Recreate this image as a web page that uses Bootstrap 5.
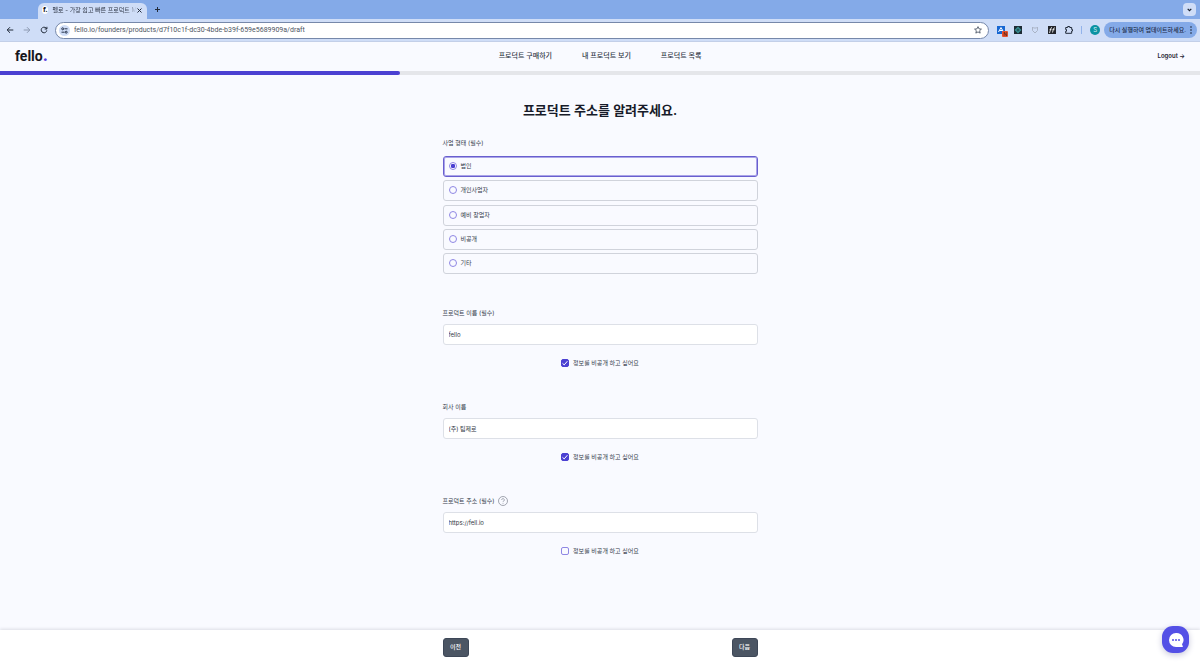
<!DOCTYPE html>
<html lang="ko">
<head>
<meta charset="utf-8">
<meta name="viewport" content="width=device-width, initial-scale=1">
<title>펠로 - 가장 쉽고 빠른 프로덕트</title>
<link href="https://cdn.jsdelivr.net/npm/bootstrap@5.3.0/dist/css/bootstrap.min.css" rel="stylesheet">
<style>
  :root { --brand: #4b40d2; --ink: #343b4a; --line: #d0d3db; }
  body { font-family: Inter, "Noto Sans CJK KR", sans-serif; font-size: 6px; line-height: 12px; color: var(--ink); background: #f9faff; }
  svg { display: block; flex: none; }
  .plain { border: 0; background: none; padding: 0; color: inherit; }
  .plain, .field-box, .step-btn { font-size: inherit; line-height: inherit; }
  .icon-gap { gap: 9px; }

  .tab-strip { height: 19px; background: #84aae8; padding: 3px 4px 0 38px; }
  .browser-tab { width: 109px; height: 16px; background: #cfddf7; border-radius: 6px 6px 0 0; color: #2b3342; padding: 0 5px 2px 4px; }
  .favicon { width: 8px; height: 8px; border-radius: 50%; background: #fff; font: 700 7px/8px "Noto Sans", sans-serif; text-align: center; color: #111; margin-right: 4px; }
  .tab-title { white-space: nowrap; -webkit-mask-image: linear-gradient(90deg, #000 85%, transparent); mask-image: linear-gradient(90deg, #000 85%, transparent); }
  .tab-list { width: 13px; height: 13px; border-radius: 4px; background: #cfddf7; }
  .tool-bar { height: 23px; background: #cfddf7; border-bottom: 1px solid #c3cfe8; padding: 0 3px 0 6px; color: #26303f; }
  .address { height: 17px; border: 1px solid #7688aa; border-radius: 9px; background: #fff; margin-left: 7px; padding: 0 6px 0 3px; }
  .site-info { width: 11px; height: 11px; border-radius: 50%; background: #cfddf7; }
  .address input { font-family: Roboto, sans-serif; font-size: 7px; color: #4d5462; outline: 0; min-width: 0; }
  .ext-count { right: -3px; bottom: -3px; width: 6px; height: 6px; border-radius: 1px; background: #e7502c; font-size: 5px; line-height: 6px; text-align: center; color: #31160f; }
  .avatar { width: 10px; height: 10px; border-radius: 50%; background: #0b93a3; color: #d8f2f4; line-height: 10px; }
  .update-pill { height: 16px; border-radius: 8px; background: #84aae8; padding: 0 5px; color: #1d2c4a; white-space: nowrap; font-weight: 500; }

  .site-head { height: 29px; padding: 0 15px 2px; font-size: 7px; font-weight: 500; }
  .site-head a { color: #303746; text-decoration: none; }
  .site-head nav { gap: 30px; }
  .site-head .logo { font: 700 14px/16px Roboto, sans-serif; color: #15161c; }
  .site-head .logo span { color: #5a3fe0; font-size: 18px; }
  .site-head .logout { font-size: 6px; font-weight: 600; color: #1d2231; }
  .step-track { height: 4px; border-radius: 0; background: #e5e6ea; }
  .step-track .progress-bar { background: var(--brand); border-radius: 0 2px 2px 0; }

  .form-col { width: 100%; max-width: 315px; }
  h1 { font-size: 13px; line-height: 20px; font-weight: 600; color: #171b29; margin: 25px 0 17px; }
  fieldset { margin-bottom: 33px; }
  legend, .field-name { font-size: 6px; line-height: 12px; font-weight: 400; float: none; }
  legend { margin: 0 0 7px; }
  .choices { height: 118px; }
  .choice { height: 21px; border: 1px solid var(--line); border-radius: 3px; padding: 0 5px 1px; gap: 4px; }
  .choice:has(:checked) { border-color: #695fcf; box-shadow: 0 0 0 1px #aaa4e8 inset; }
  .tick { appearance: none; width: 8px; height: 8px; margin: 0; border: 1px solid #8f87e4; background: transparent; flex: none; }
  .tick[type=radio] { border-radius: 50%; }
  .tick[type=radio]:checked { background: radial-gradient(circle, var(--brand) 45%, #fff 60%); }
  .tick[type=checkbox] { border-radius: 2px; }
  .tick[type=checkbox]:checked { border-color: var(--brand); background: var(--brand) url("data:image/svg+xml,%3Csvg xmlns='http://www.w3.org/2000/svg' viewBox='0 0 8 8'%3E%3Cpath fill='none' stroke='white' stroke-width='1' d='M1.5 4.3l1.7 1.6 3.2-3.7'/%3E%3C/svg%3E") center/8px; }
  .field { margin-bottom: 32px; }
  .field-box { height: 21px; border: 1px solid #dde0e7; border-radius: 3px; background: #fff; padding: 0 5px; color: #303642; margin: 5px 0 12px; outline: 0; }
  .hush { gap: 4px; }

  .site-foot { height: 34px; background: #fff; box-shadow: 0 -1px 3px #dcdde5; }
  .step-btn { width: 26px; height: 19px; border: 1px solid #3d4757; border-radius: 3px; background: #4b5563; color: #fff; padding: 0; font-weight: 500; }
  .chat { right: 11px; bottom: 11px; width: 27px; height: 27px; border-radius: 11px; background: #5450e6; box-shadow: 0 2px 6px #c9c9dc; z-index: 1030; }
</style>
</head>
<body class="d-flex flex-column min-vh-100">
<div class="tab-strip d-flex">
  <div class="browser-tab d-flex align-items-center">
    <span class="favicon">f.</span>
    <span class="tab-title">펠로 - 가장 쉽고 빠른 프로덕트 M</span>
    <button class="plain ms-auto" aria-label="탭 닫기"><svg width="5" height="5" viewBox="0 0 5 5" stroke="#222b3a"><path d="M.5.5l4 4M4.500.5l-4 4"/></svg></button>
  </div>
  <button class="plain ms-2 mb-1" aria-label="새 탭"><svg width="5" height="5" viewBox="0 0 5 5" stroke="#222b3a"><path d="M2.500 0v5M0 2.500h5"/></svg></button>
  <button class="plain tab-list ms-auto d-flex align-items-center justify-content-center" aria-label="탭 검색"><svg width="5" height="4" viewBox="0 0 5 4" fill="none" stroke="#17202f" stroke-width="1.200"><path d="M.7.8l1.800 1.800L4.300.8"/></svg></button>
</div>
<div class="tool-bar d-flex align-items-center">
  <div class="d-flex align-items-center icon-gap">
    <button class="plain" aria-label="뒤로"><svg width="8" height="8" viewBox="0 0 8 8" fill="none" stroke="#202a39"><path d="M7.300 4H1.200M4 1.200L1.200 4 4 6.800"/></svg></button>
    <button class="plain" aria-label="앞으로"><svg width="8" height="8" viewBox="0 0 8 8" fill="none" stroke="#8d9ab2"><path d="M.7 4h6.100M4 1.200L6.800 4 4 6.800"/></svg></button>
    <button class="plain" aria-label="새로고침"><svg width="8" height="8" viewBox="0 0 8 8" fill="none" stroke="#202a39"><path d="M6.800 4.400A2.800 2.800 0 1 1 6 2l.8.8M6.900.8v2.200H4.700"/></svg></button>
  </div>
  <div class="address d-flex align-items-center flex-grow-1">
    <span class="site-info d-flex align-items-center justify-content-center"><svg width="7" height="7" viewBox="0 0 7 7" fill="none" stroke="#26334b"><path d="M3.500 1.800H6.500M.5 5.200h3"/><circle cx="1.700" cy="1.800" r="1"/><circle cx="5.200" cy="5.200" r="1"/></svg></span>
    <input class="plain flex-grow-1 ms-1" type="text" aria-label="주소" value="fello.io/founders/products/d7f10c1f-dc30-4bde-b39f-659e5689909a/draft">
    <svg width="8" height="8" viewBox="0 0 10 10" fill="none" stroke="#3b4658"><path d="M5 .8l1.300 2.800 3 .3-2.300 2 .7 3L5 7.400 2.300 8.900l.7-3-2.300-2 3-.3z"/></svg>
  </div>
  <div class="d-flex align-items-center ms-2 gap-2">
    <div class="d-flex align-items-center icon-gap">
      <span class="position-relative"><svg width="8" height="8" viewBox="0 0 8 8"><path fill="#1767d2" d="M0 0h8v8H0z"/><path fill="none" stroke="#fff" d="M1.500 6L4 1.500 6.500 6M2.500 4.500h3"/></svg><span class="ext-count position-absolute">N</span></span>
      <svg width="8" height="8" viewBox="0 0 8 8"><path fill="#1d2c35" d="M0 0h8v8H0z"/><g fill="none" stroke="#3ba5a7" stroke-width=".8"><ellipse cx="4" cy="4" rx="3" ry="1.300"/><ellipse cx="4" cy="4" rx="1.300" ry="3"/></g></svg>
      <svg width="8" height="8" viewBox="0 0 8 8" fill="none" stroke="#a9b3c5"><path d="M1.500 1l1 1h3l1-1v3.500L4 7 1.500 4.500z"/></svg>
      <svg width="8" height="8" viewBox="0 0 8 8"><path fill="#22252b" d="M0 0h8v8H0z"/><path fill="none" stroke="#fff" stroke-width=".8" d="M1.500 7l1.500-5 1-.7M1.500 3.700h2M4.500 6.500l1-4 1.500-.8M4.500 3.700h2"/></svg>
      <svg width="8" height="8" viewBox="0 0 8 8" fill="none" stroke="#202a39"><path d="M.7 1.500h2V.5h2v1h2v2h.8v1.500h-.8v2.300H.7V5.200h.8V3.500H.7z"/></svg>
    </div>
    <svg width="1" height="8"><path fill="#92b3ea" d="M0 0h1v8H0z"/></svg>
    <span class="avatar text-center">S</span>
  </div>
  <button class="plain update-pill d-flex align-items-center ms-1">다시 실행하여 업데이트하세요.<svg class="ms-1" width="2" height="8" viewBox="0 0 2 8" fill="#17202f"><circle cx="1" cy="1" r=".8"/><circle cx="1" cy="4" r=".8"/><circle cx="1" cy="7" r=".8"/></svg></button>
</div>

<header class="site-head row g-0 align-items-center">
  <div class="col"><a class="logo" href="#">fello<span>.</span></a></div>
  <nav class="col-auto d-flex"><a href="#">프로덕트 구매하기</a><a href="#">내 프로덕트 보기</a><a href="#">프로덕트 목록</a></nav>
  <div class="col text-end"><a class="logout" href="#">Logout →</a></div>
</header>
<div class="progress step-track" role="progressbar" aria-label="진행 단계" aria-valuenow="33" aria-valuemin="0" aria-valuemax="100"><div class="progress-bar" style="width:33.3%"></div></div>

<main class="form-col mx-auto flex-grow-1">
  <h1 class="text-center">프로덕트 주소를 알려주세요.</h1>
  <form>
    <fieldset>
      <legend>사업 형태 (필수)</legend>
      <div class="choices d-flex flex-column justify-content-between">
        <label class="choice d-flex align-items-center"><input class="tick" type="radio" name="biz" checked>법인</label>
        <label class="choice d-flex align-items-center"><input class="tick" type="radio" name="biz">개인사업자</label>
        <label class="choice d-flex align-items-center"><input class="tick" type="radio" name="biz">예비 창업자</label>
        <label class="choice d-flex align-items-center"><input class="tick" type="radio" name="biz">비공개</label>
        <label class="choice d-flex align-items-center"><input class="tick" type="radio" name="biz">기타</label>
      </div>
    </fieldset>
    <div class="field">
      <label class="field-name d-block" for="product">프로덕트 이름 (필수)</label>
      <input class="field-box d-block w-100" id="product" type="text" value="fello">
      <label class="hush d-flex align-items-center justify-content-center"><input class="tick" type="checkbox" checked>정보를 비공개 하고 싶어요</label>
    </div>
    <div class="field">
      <label class="field-name d-block" for="company">회사 이름</label>
      <input class="field-box d-block w-100" id="company" type="text" value="(주) 팀제로">
      <label class="hush d-flex align-items-center justify-content-center"><input class="tick" type="checkbox" checked>정보를 비공개 하고 싶어요</label>
    </div>
    <div class="field">
      <div class="d-flex align-items-center gap-1">
        <label class="field-name" for="address">프로덕트 주소 (필수)</label>
        <button type="button" class="plain" aria-label="도움말"><svg width="10" height="10" viewBox="0 0 10 10" fill="none" stroke="#8b919c" stroke-width=".8"><circle cx="5" cy="5" r="4.500"/><path d="M3.700 4a1.300 1.300 0 1 1 2 1c-.5.3-.7.5-.7 1M5 6.900v.8"/></svg></button>
      </div>
      <input class="field-box d-block w-100" id="address" type="url" value="https://fell.io">
      <label class="hush d-flex align-items-center justify-content-center"><input class="tick" type="checkbox">정보를 비공개 하고 싶어요</label>
    </div>
  </form>
</main>

<footer class="site-foot sticky-bottom">
  <div class="form-col mx-auto h-100 d-flex align-items-center justify-content-between">
    <button class="step-btn">이전</button><button class="step-btn">다음</button>
  </div>
</footer>
<button class="plain chat position-fixed d-flex align-items-center justify-content-center" aria-label="채팅 상담"><svg width="16" height="16" viewBox="0 0 16 16"><path fill="#fff" d="M8 1a7 7 0 1 0 0 14h6.200c.6 0 .8-.5.5-1l-.7-1.700A7 7 0 0 0 8 1z"/><g fill="#5450e6"><circle cx="5" cy="8" r="1"/><circle cx="8" cy="8" r="1"/><circle cx="11" cy="8" r="1"/></g></svg></button>
<script src="https://cdn.jsdelivr.net/npm/bootstrap@5.3.0/dist/js/bootstrap.bundle.min.js"></script>
</body>
</html>
